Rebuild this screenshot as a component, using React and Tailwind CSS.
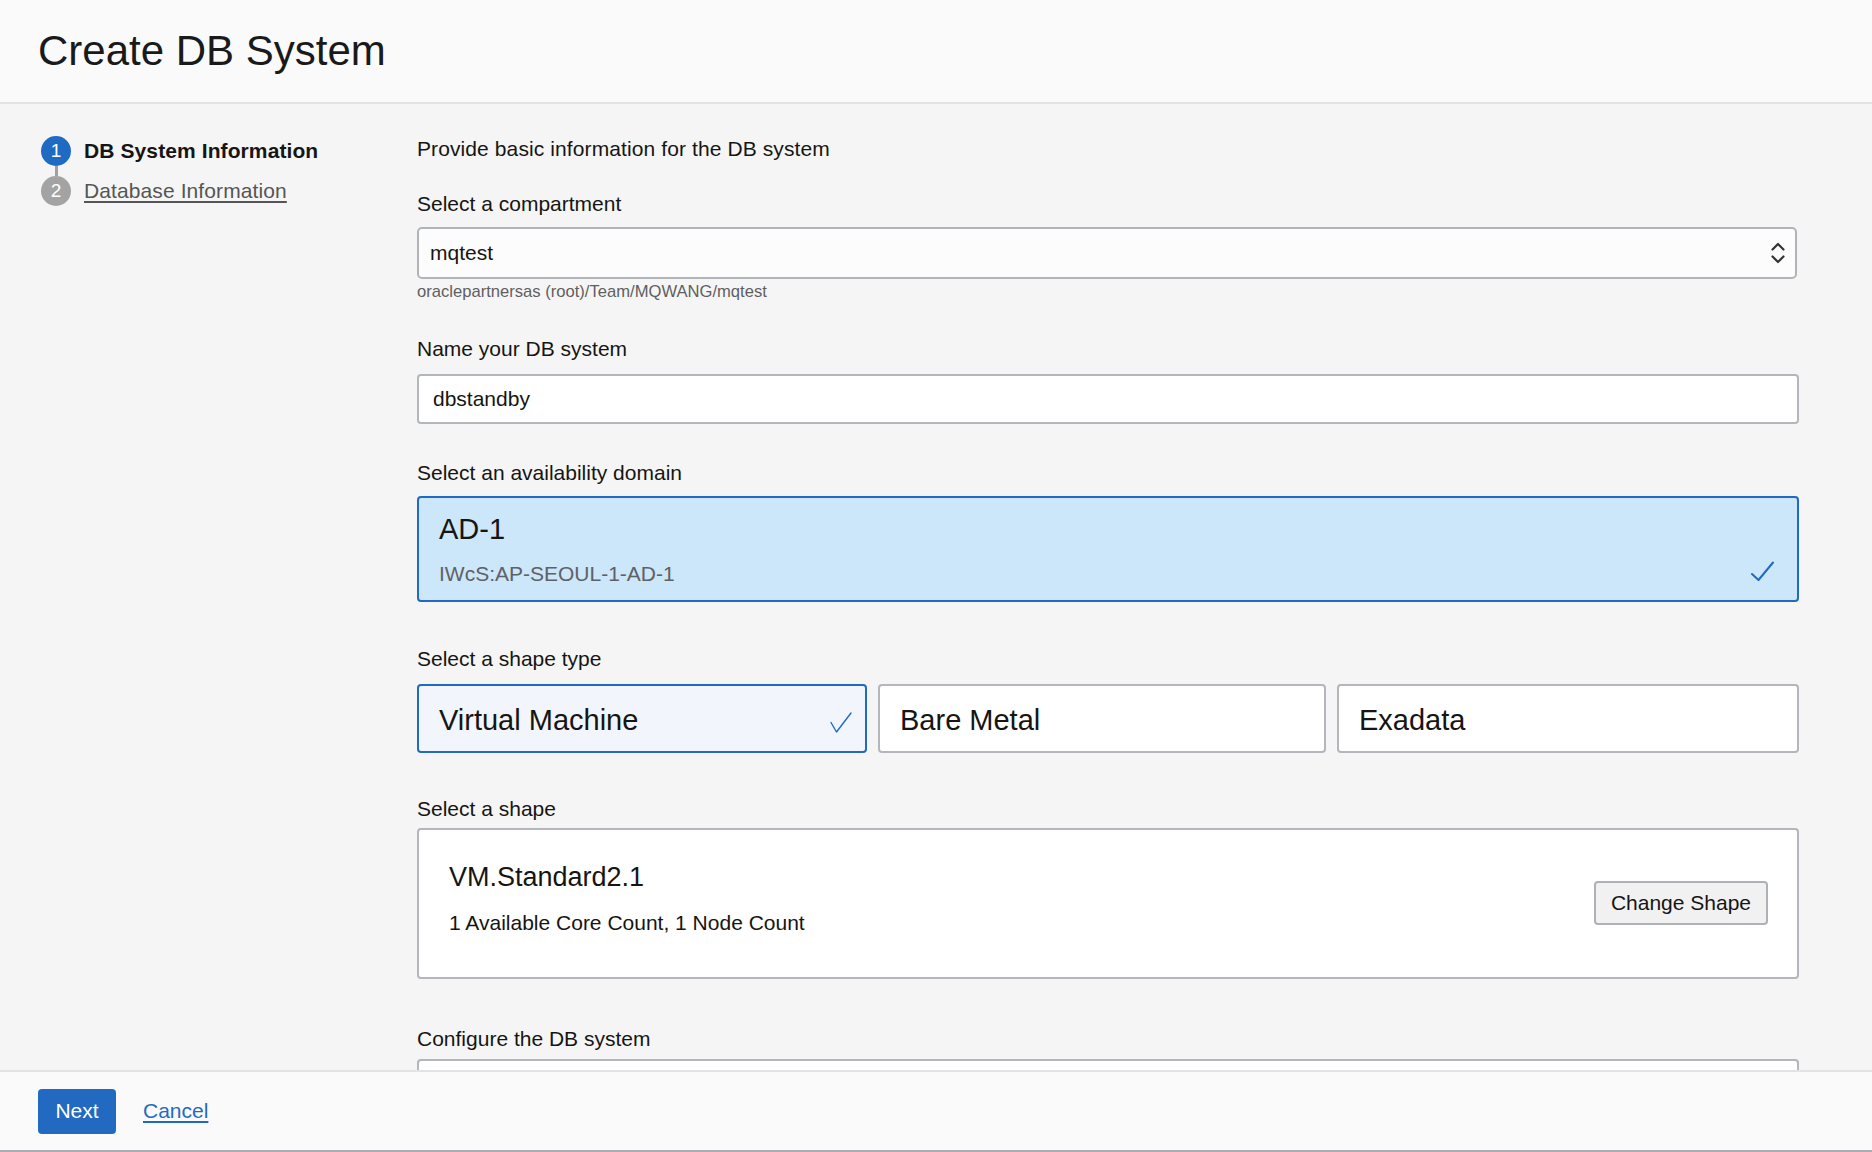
import React from "react";

function Check({ w = 22, h = 20, d, sw = 2 }) {
  return (
    <svg width={w} height={h} viewBox={`0 0 ${w} ${h}`} fill="none">
      <path d={d} stroke="#1f6bc4" strokeWidth={sw} strokeLinecap="round" strokeLinejoin="round" />
    </svg>
  );
}

function Label({ children, className = "" }) {
  return <div className={`text-[21px] leading-[26px] text-[#161513] ${className}`}>{children}</div>;
}

export default function App() {
  return (
    <div className="h-[1152px] w-full flex flex-col bg-[#f5f5f5] overflow-hidden font-['Liberation_Sans',Arial,sans-serif] text-[#161513]">
      <header className="h-[104px] shrink-0 bg-[#fafafa] border-b-2 border-[#e3e3e3] flex items-center pl-[38px]">
        <h1 className="text-[42px] leading-[50px] text-[#1a1a1a]">Create DB System</h1>
      </header>

      <div className="flex-1 min-h-0 flex overflow-hidden">
        <aside className="w-[417px] shrink-0 pl-[41px] pt-[32px]">
          <div className="flex items-center gap-[13px] h-[30px]">
            <div className="w-[30px] h-[30px] rounded-full bg-[#1f6bc4] text-white text-[19px] flex items-center justify-center">1</div>
            <span className="text-[21px] font-bold text-[#161513] tracking-[0.1px]">DB System Information</span>
          </div>
          <div className="w-[3px] h-[10px] bg-[#a0a0a0] ml-[13.5px]"></div>
          <div className="flex items-center gap-[13px] h-[30px]">
            <div className="w-[30px] h-[30px] rounded-full bg-[#a3a3a3] text-white text-[19px] flex items-center justify-center">2</div>
            <span className="text-[21px] text-[#555555] underline underline-offset-[3px] tracking-[0.1px]">Database Information</span>
          </div>
        </aside>

        <main className="w-[1382px] shrink-0 pt-[32px]">
          <Label className="tracking-[0.1px]">Provide basic information for the DB system</Label>

          <Label className="mt-[29px]">Select a compartment</Label>
          <div className="mt-[10px] w-[1380px] h-[52px] border-2 border-[#b0b4b9] rounded-[5px] bg-[#fcfcfc] flex items-center justify-between pl-[11px] pr-[10px]">
            <span className="text-[21px] text-[#161513]">mqtest</span>
            <svg width="14" height="22" viewBox="0 0 14 22" fill="none">
              <path d="M1.5 7.5 L7 2 L12.5 7.5" stroke="#333" strokeWidth="2.2" strokeLinecap="round" strokeLinejoin="round" />
              <path d="M1.5 14.5 L7 20 L12.5 14.5" stroke="#333" strokeWidth="2.2" strokeLinecap="round" strokeLinejoin="round" />
            </svg>
          </div>
          <div className="mt-[3px] text-[16.6px] leading-[20px] text-[#5f5f5f]">oraclepartnersas (root)/Team/MQWANG/mqtest</div>

          <Label className="mt-[34px]">Name your DB system</Label>
          <div className="mt-[12px] h-[50px] border-2 border-[#b3b6ba] rounded-[4px] bg-white flex items-center pl-[14px]">
            <span className="text-[21px] text-[#161513]">dbstandby</span>
          </div>

          <Label className="mt-[36px]">Select an availability domain</Label>
          <div className="mt-[10px] h-[106px] border-2 border-[#1f6bc4] rounded-[4px] bg-[#cce6fa] flex items-end justify-between pl-[20px] pr-[23px] pt-[14px] pb-[13px]">
            <div className="self-start">
              <div className="text-[29px] leading-[34px] text-[#161513]">AD-1</div>
              <div className="mt-[15px] text-[21px] leading-[26px] text-[#5e6166]">IWcS:AP-SEOUL-1-AD-1</div>
            </div>
            <div className="mb-[6px]">
              <Check w={23} h={20} d="M1 13 L7.5 19 L22 1.5" sw={2} />
            </div>
          </div>

          <Label className="mt-[44px]">Select a shape type</Label>
          <div className="mt-[12px] grid grid-cols-[450px_448px_1fr] gap-[11px]">
            <div className="h-[69px] border-2 border-[#1f6bc4] rounded-[4px] bg-[#f2f6fc] flex items-center justify-between pl-[20px] pr-[13px]">
              <span className="text-[29px] leading-[34px] pt-[3px] text-[#161513]">Virtual Machine</span>
              <div className="mt-[7px]">
                <Check w={22} h={21} d="M1 10.5 L6.5 20 L21 1" sw={1.4} />
              </div>
            </div>
            <div className="h-[69px] border-2 border-[#b3b6ba] rounded-[4px] bg-white flex items-center pl-[20px]">
              <span className="text-[29px] leading-[34px] pt-[3px] text-[#161513]">Bare Metal</span>
            </div>
            <div className="h-[69px] border-2 border-[#b3b6ba] rounded-[4px] bg-white flex items-center pl-[20px]">
              <span className="text-[29px] leading-[34px] pt-[3px] text-[#161513]">Exadata</span>
            </div>
          </div>

          <Label className="mt-[43px]">Select a shape</Label>
          <div className="mt-[6px] h-[151px] border-2 border-[#b3b6ba] rounded-[4px] bg-white flex justify-between items-start pl-[30px] pr-[29px] pt-[31px]">
            <div>
              <div className="text-[27px] leading-[32px] text-[#161513]">VM.Standard2.1</div>
              <div className="mt-[17px] text-[21px] leading-[26px] text-[#161513]">1 Available Core Count, 1 Node Count</div>
            </div>
            <button className="mt-[20px] h-[44px] px-[15px] border-2 border-[#aeb2b6] rounded-[4px] bg-[#f1f1f1] text-[21px] text-[#161513]">
              Change Shape
            </button>
          </div>

          <Label className="mt-[47px]">Configure the DB system</Label>
          <div className="mt-[7px] h-[200px] border-2 border-[#b3b6ba] rounded-[4px] bg-white"></div>
        </main>
      </div>

      <footer className="h-[82px] shrink-0 bg-[#fafafa] border-t-2 border-t-[#e3e3e3] border-b-2 border-b-[#aaaeb2] flex items-center pl-[38px] gap-[27px]">
        <button className="w-[78px] h-[45px] rounded-[4px] bg-[#2169c1] text-white text-[21px]">Next</button>
        <a className="text-[21px] text-[#1f6bc4] underline underline-offset-[3px] cursor-pointer">Cancel</a>
      </footer>
    </div>
  );
}
